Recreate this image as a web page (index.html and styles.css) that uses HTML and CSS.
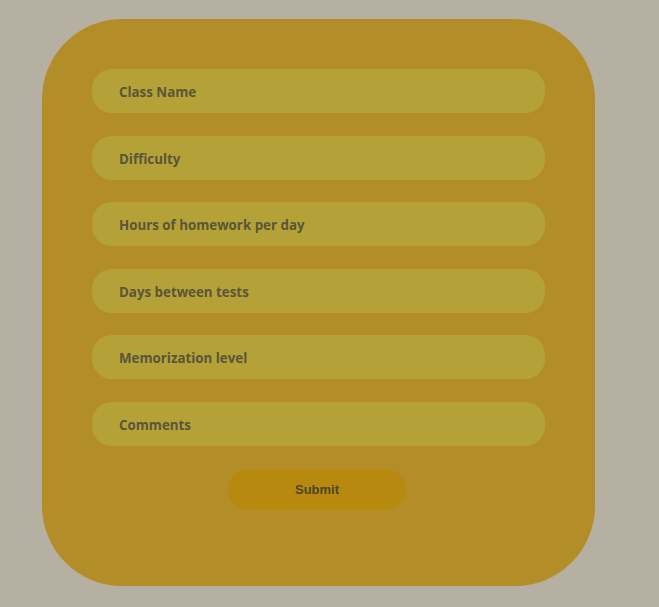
FILE: index.html
```html
<!DOCTYPE html>
<html lang="en">
<head>
    <meta charset="UTF-8">
    <meta name="viewport" content="width=device-width, initial-scale=1.0">
    <title>Class Survey</title>
    <link rel="stylesheet" href="styles.css">
</head>
<body>
    <form class="card">
        <input type="text" class="field" placeholder="Class Name">
        <input type="text" class="field" placeholder="Difficulty">
        <input type="text" class="field" placeholder="Hours of homework per day">
        <input type="text" class="field" placeholder="Days between tests">
        <input type="text" class="field" placeholder="Memorization level">
        <input type="text" class="field" placeholder="Comments">
        <button type="button" class="submit">Submit</button>
    </form>
</body>
</html>
```

FILE: styles.css
```css
* {
    margin: 0;
    padding: 0;
    box-sizing: border-box;
}

body {
    background-color: #b5b0a2;
    font-family: 'Open Sans', sans-serif;
    padding: 19px 0 0 42px;
}

.card {
    width: 553px;
    height: 567px;
    background: #b38e28;
    border-radius: 80px;
    padding: 50px 50px 75px;
    display: flex;
    flex-direction: column;
    gap: 22.6px;
}

.field {
    height: 44px;
    width: 100%;
    background: #b4a239;
    border: none;
    border-radius: 20px;
    padding: 2px 27px 0;
    font-family: 'Open Sans', sans-serif;
    font-size: 13.33px;
    font-weight: 700;
    color: #5a5538;
    outline: none;
}

.field::placeholder {
    color: #5a5538;
    opacity: 1;
}

.submit {
    align-self: center;
    width: 178px;
    height: 41px;
    margin-top: 0.4px;
    margin-right: 3px;
    background: #b7890e;
    border: none;
    border-radius: 20px;
    font-family: 'Liberation Sans', Arial, sans-serif;
    font-size: 13px;
    font-weight: 700;
    color: #4f4426;
    cursor: pointer;
}
```
